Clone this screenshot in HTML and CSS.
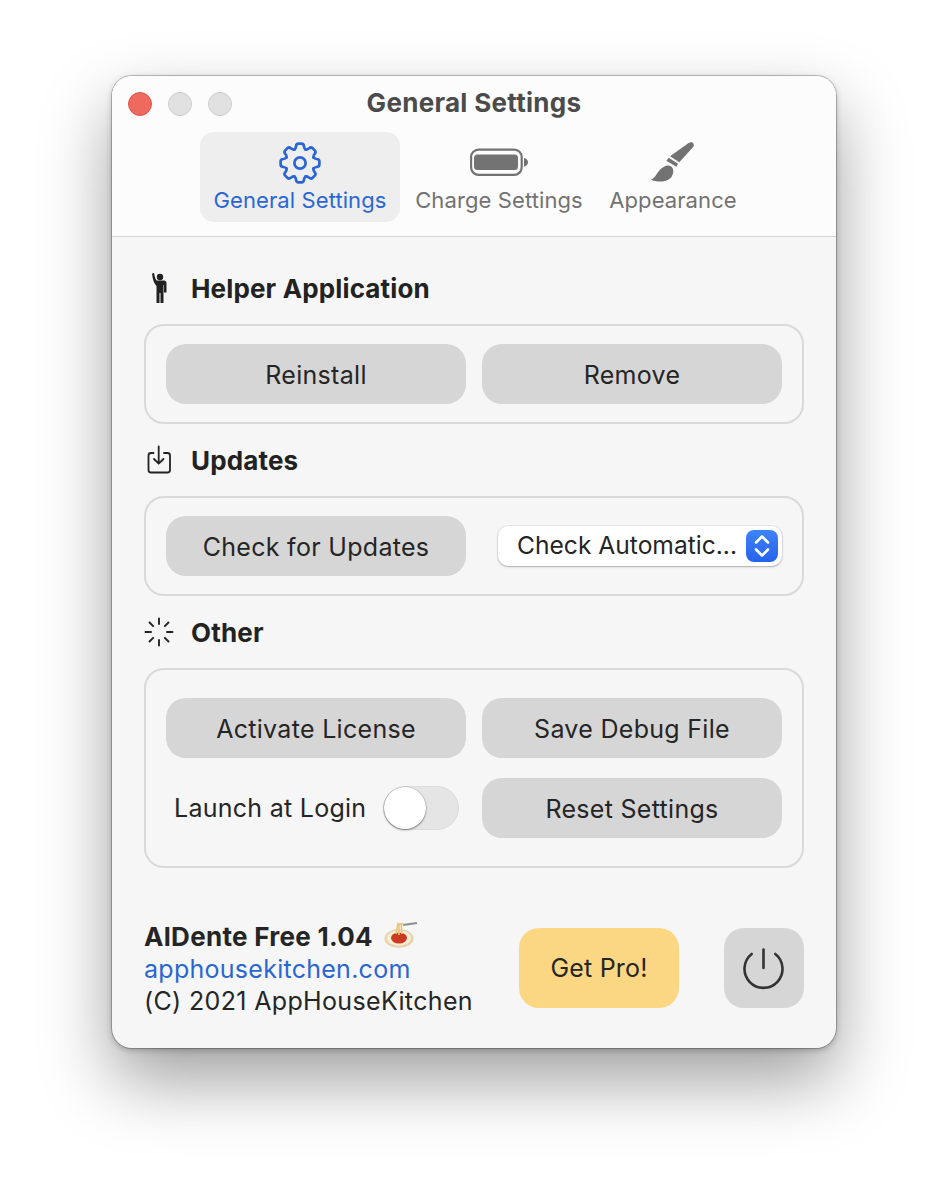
FILE: index.html
```html
<!DOCTYPE html>
<html lang="en">
<head>
<meta charset="utf-8">
<title>General Settings</title>
<link rel="stylesheet" href="styles.css">
</head>
<body>
<main class="window">
  <header class="toolbar">
    <div class="titlebar">
      <div class="lights"><span class="light red"></span><span class="light"></span><span class="light"></span></div>
      <div class="title">General Settings</div>
    </div>
    <nav class="tabs">
      <div class="tab tab-general active">
        <svg class="tab-icon" width="44" height="44" viewBox="-22 -22 44 44" fill="none" stroke="currentColor" stroke-width="2.7" stroke-linecap="round" stroke-linejoin="round">
          <defs><path id="tooth" d="M-5.55-13.4Q-4.2-14.6-4-16.5Q-3.8-19.4-1.5-19.4H1.5Q3.8-19.4 4-16.5Q4.2-14.6 5.55-13.4"/></defs>
          <use href="#tooth"/><use href="#tooth" transform="rotate(45)"/><use href="#tooth" transform="rotate(90)"/><use href="#tooth" transform="rotate(135)"/><use href="#tooth" transform="rotate(180)"/><use href="#tooth" transform="rotate(225)"/><use href="#tooth" transform="rotate(270)"/><use href="#tooth" transform="rotate(315)"/>
          <circle r="5.6"/>
        </svg>
        <span>General Settings</span>
      </div>
      <div class="tab tab-charge">
        <svg class="tab-icon" width="60" height="44" viewBox="0 0 60 44" fill="currentColor">
          <rect x="2.1" y="8.6" width="50.6" height="25.2" rx="7.5" fill="none" stroke="currentColor" stroke-width="2.2"/>
          <rect x="5" y="13.500" width="44" height="15.500" rx="3.5"/>
          <path d="M55 17C57.5 17.500 59 19 59 21.200S57.500 25 55 25.800Z"/>
        </svg>
        <span>Charge Settings</span>
      </div>
      <div class="tab tab-appearance">
        <svg class="tab-icon" width="44" height="44" viewBox="753 36 132 132" fill="currentColor">
          <path d="M866 42C875 36 885 44 880 53L838 100L810 82Z"/>
          <path d="M806 86L834 104L829 113L799 95Z"/>
          <path d="M792 113C812 102 830 120 813 146C797 161 770 160 752 152C770 147 770 124 792 113Z"/>
        </svg>
        <span>Appearance</span>
      </div>
    </nav>
  </header>

  <div class="content">
    <section>
      <h2 class="heading heading-first">
        <span class="heading-icon">
          <svg width="24" height="32" viewBox="-4.5 0 24 32" fill="currentColor">
            <circle cx="11.5" cy="5" r="3.2"/>
            <path d="M3.5 1.5L5.6 1C6 4 6.800 6.500 8 8.500H15.500C17 8.500 18 9.500 18 11V20.500H15.500V13H15V31H12V21H11V31H8V14C5.500 11.500 4 7 3.500 1.500Z"/>
          </svg>
        </span>
        Helper Application
      </h2>
      <div class="box">
        <div class="button">Reinstall</div>
        <div class="button">Remove</div>
      </div>
    </section>

    <section>
      <h2 class="heading">
        <span class="heading-icon">
          <svg width="28" height="30" viewBox="-1.5 0 28 30" fill="none" stroke="currentColor" stroke-width="1.800" stroke-linecap="round" stroke-linejoin="round">
            <path d="M8 8H5.500C3.800 8 3 9 3 10.500V25C3 26.500 3.800 27.500 5.500 27.500H22C23.700 27.500 24.500 26.500 24.500 25V10.500C24.500 9 23.700 8 22 8H18.500"/>
            <path d="M13.200 1.500V18.500M8.500 14L13.200 18.700L18 14"/>
          </svg>
        </span>
        Updates
      </h2>
      <div class="box">
        <div class="button">Check for Updates</div>
        <div class="select">
          <span class="select-text">Check Automatic...</span>
          <span class="select-chip">
            <svg width="20" height="26" viewBox="0 0 20 26" fill="none" stroke="#fff" stroke-width="2.600" stroke-linecap="round" stroke-linejoin="round"><path d="M4 9.500L10 3.500L16 9.500M4 16.500L10 22.500L16 16.500"/></svg>
          </span>
        </div>
      </div>
    </section>

    <section>
      <h2 class="heading">
        <span class="heading-icon">
          <svg width="30" height="30" viewBox="-15 -15 30 30" fill="none" stroke="currentColor" stroke-width="1.900" stroke-linecap="round">
            <path d="M0-13.500V-8M0 8V13.500M-13.500 0H-8M8 0H13.500M-9.500-9.500L-5.800-5.800M5.800 5.800L9.500 9.500M-9.500 9.500L-5.800 5.800M5.800-5.800L9.500-9.500"/>
          </svg>
        </span>
        Other
      </h2>
      <div class="box box-grid">
        <div class="button">Activate License</div>
        <div class="button">Save Debug File</div>
        <div class="toggle-row">
          <span>Launch at Login</span>
          <span class="toggle"><span class="knob"></span></span>
        </div>
        <div class="button">Reset Settings</div>
      </div>
    </section>

    <footer class="footer">
      <div class="about">
        <div class="about-name">AlDente Free 1.04
          <svg class="pasta" width="34" height="30" viewBox="0 0 34 30">
            <path d="M19 6L33 4" stroke="#8d8d8d" stroke-width="1.800" fill="none"/>
            <ellipse cx="15" cy="19.500" rx="14.500" ry="9.500" fill="#e6d5ad"/>
            <ellipse cx="15" cy="19" rx="12" ry="7.500" fill="#f8eed6"/>
            <ellipse cx="15" cy="19" rx="8" ry="5.500" fill="#cc3a22"/>
            <path d="M12 15L14 5M15 16V4M18 15L17 4M13 5H20" stroke="#e6c777" stroke-width="1.600" fill="none"/>
          </svg>
        </div>
        <div class="about-link">apphousekitchen.com</div>
        <div>(C) 2021 AppHouseKitchen</div>
      </div>
      <div class="pro">Get Pro!</div>
      <div class="power">
        <svg width="44" height="44" viewBox="0 -2 44 44" fill="none" stroke="#333" stroke-width="2.600" stroke-linecap="round">
          <path d="M21.500 1.500V20M9.700 6A19 19 0 1 0 33.300 6"/>
        </svg>
      </div>
    </footer>
  </div>
</main>
</body>
</html>
```

FILE: styles.css
```css
* { box-sizing: border-box; }

html, body { margin: 0; height: 100%; }

body {
  background: #fff;
  font-family: "Inter", "Liberation Sans", sans-serif;
  color: #252525;
  padding-top: 76px;
  display: flex;
  justify-content: center;
  align-items: flex-start;
  overflow: hidden;
}

.window {
  width: 724px;
  height: 972px;
  background: #f6f6f6;
  border-radius: 20px;
  overflow: hidden;
  box-shadow:
    0 0 0 1px rgba(0, 0, 0, .22),
    0 2px 6px rgba(0, 0, 0, .25),
    0 32px 70px rgba(0, 0, 0, .38);
}

.toolbar {
  height: 161px;
  background: #fcfcfc;
  border-bottom: 1px solid #d4d4d4;
}

.titlebar {
  height: 56px;
  display: grid;
  grid-template-columns: 1fr auto 1fr;
  align-items: center;
  padding: 0 16px;
}

.lights { display: flex; gap: 16px; }

.light {
  width: 24px;
  height: 24px;
  border-radius: 50%;
  background: #e1e1e1;
  border: 1px solid #cbcbcb;
}

.light.red { background: #ee6a5f; border-color: #d9584e; }

.title {
  grid-column: 2;
  font-size: 26px;
  font-weight: 700;
  letter-spacing: .3px;
  line-height: 52px;
  margin-bottom: 2px;
  color: #4b4b4b;
}

.tabs { display: flex; justify-content: center; }

.tab {
  height: 90px;
  border-radius: 14px;
  display: flex;
  flex-direction: column;
  align-items: center;
  font-size: 22px;
  letter-spacing: .1px;
  color: #727272;
  white-space: nowrap;
}

.tab-icon { display: block; margin-top: 9px; height: 44px; }

.tab span { margin-top: 2px; line-height: 26px; }

.tab-general { width: 200px; }
.tab-charge { width: 198px; }
.tab-appearance { width: 150px; }

.tab.active { background: #eeeeee; color: #2a66d6; }

.content { padding: 15px 32px 0; }

.heading {
  margin: 0;
  height: 72px;
  display: flex;
  align-items: center;
  font-size: 26px;
  font-weight: 700;
  letter-spacing: .15px;
  color: #222;
}

.heading-icon {
  width: 47px;
  display: flex;
  justify-content: flex-start;
}

.box {
  width: 660px;
  padding: 18px 20px;
  border: 2px solid #d9d9d9;
  border-radius: 20px;
  display: grid;
  grid-template-columns: 300px 300px;
  column-gap: 16px;
  align-items: center;
}

.box-grid { padding: 28px 20px; row-gap: 20px; }

.button {
  height: 60px;
  padding-top: 2px;
  border-radius: 20px;
  background: #d6d6d6;
  display: flex;
  align-items: center;
  justify-content: center;
  font-size: 25px;
  letter-spacing: .3px;
}

.select {
  justify-self: end;
  width: 284px;
  height: 40px;
  background: #fff;
  border-radius: 10px;
  box-shadow: 0 0 0 1px rgba(0, 0, 0, .05), 0 1px 2px rgba(0, 0, 0, .25);
  display: flex;
  align-items: center;
  justify-content: space-between;
  padding: 0 4px 0 19px;
  font-size: 24.6px;
}

.select-text { margin-top: -3px; }

.select-chip {
  width: 32px;
  height: 32px;
  border-radius: 8px;
  background: linear-gradient(#3f83f8, #2563eb);
  display: flex;
  align-items: center;
  justify-content: center;
}

.toggle-row {
  display: flex;
  align-items: center;
  justify-content: space-between;
  padding: 0 7px 0 8px;
  font-size: 25px;
  letter-spacing: .27px;
}

.toggle {
  width: 76px;
  height: 44px;
  border-radius: 22px;
  background: #e5e5e5;
  border: 1px solid #dcdcdc;
  display: flex;
  align-items: center;
}

.knob {
  width: 42px;
  height: 42px;
  border-radius: 50%;
  background: #fff;
  box-shadow: 0 1px 2px rgba(0, 0, 0, .45), 0 0 0 .5px rgba(0, 0, 0, .15);
}

.footer {
  margin-top: 60px;
  display: flex;
  align-items: center;
  height: 80px;
}

.about {
  font-size: 25px;
  line-height: 32px;
  letter-spacing: .35px;
  margin-right: auto;
  padding-top: 2px;
  white-space: nowrap;
}

.about-name {
  font-size: 26px;
  letter-spacing: .3px;
  font-weight: 700;
  display: flex;
  align-items: center;
  gap: 11px;
}

.pasta { margin-top: -6px; }

.about-link { color: #2a66d0; letter-spacing: .27px; }

.pro {
  width: 160px;
  height: 80px;
  border-radius: 20px;
  background: #fbd784;
  display: flex;
  align-items: center;
  justify-content: center;
  font-size: 25px;
  letter-spacing: .2px;
  margin-right: 45px;
}

.power {
  width: 80px;
  height: 80px;
  border-radius: 20px;
  background: #d6d6d6;
  display: flex;
  align-items: center;
  justify-content: center;
}
```
